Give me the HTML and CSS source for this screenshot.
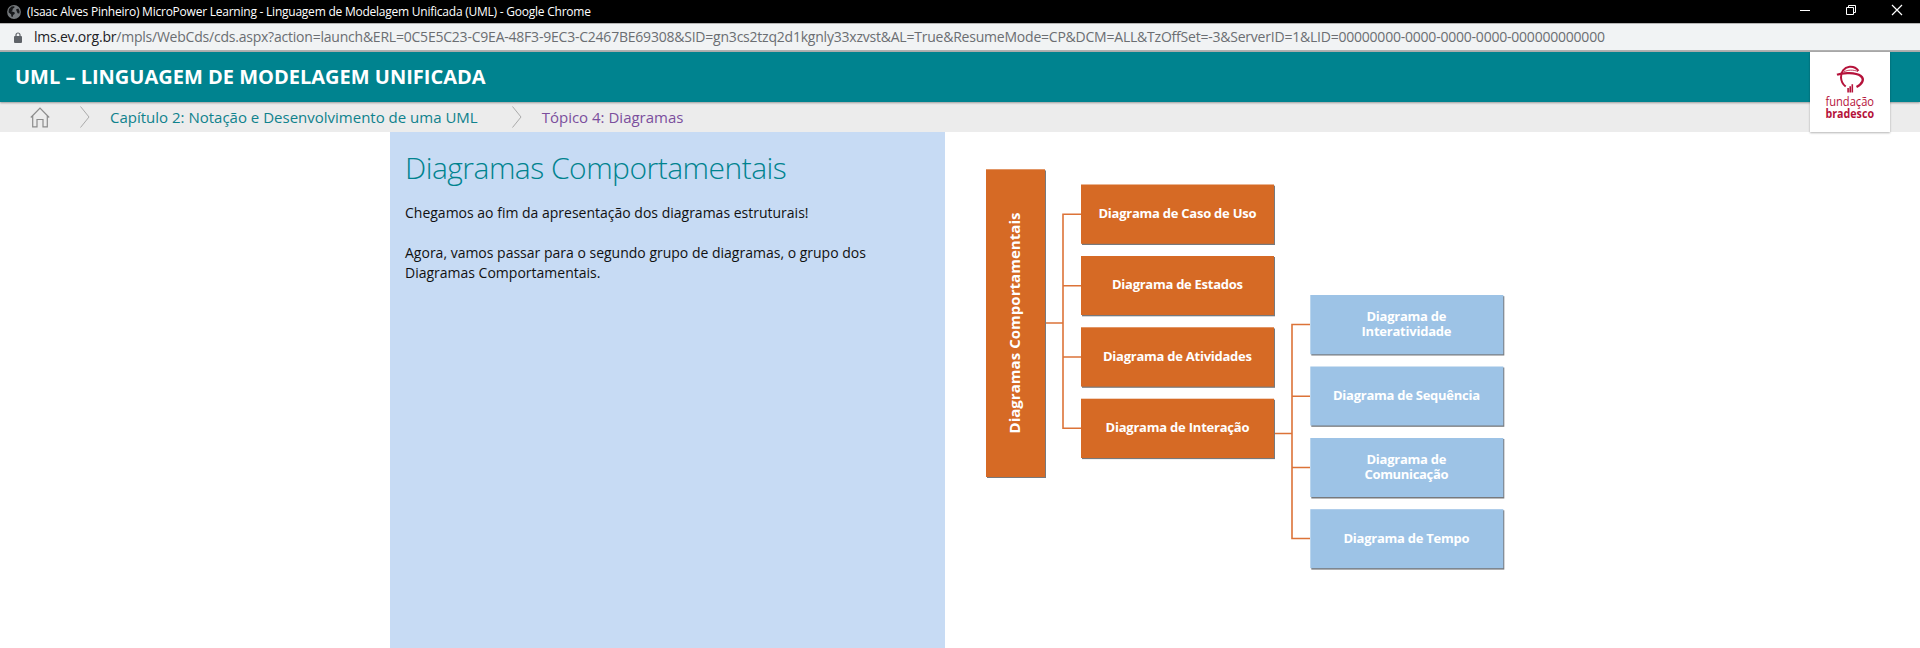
FILE: index.html
```html
<!DOCTYPE html>
<html lang="pt-BR">
<head>
<meta charset="utf-8">
<title>UML – Linguagem de Modelagem Unificada</title>
<link rel="stylesheet" href="styles.css">
</head>
<body>
<div class="titlebar">
  <svg class="globe" width="14" height="14" viewBox="0 0 14 14"><circle cx="7" cy="7" r="6.9" fill="#74787b"/><path d="M2 4 4.500 1.600 7.300 1.300 7.500 2.500 5.800 3.700 5.500 5.500 4.300 6.200 7.500 7.300 7.800 8.800 6.200 10 5.600 12 4.300 11.600 4.200 9.600 1.500 7.200ZM9 4.500 11.300 3.500 12.600 6.200 12.300 8.600 10.600 8.200 9.800 6.400Z" fill="#16181a"/></svg>
  <span class="window-title">(Isaac Alves Pinheiro) MicroPower Learning - Linguagem de Modelagem Unificada (UML) - Google Chrome</span>
  <svg class="controls" width="104" height="23" viewBox="0 0 104 23" fill="none" stroke="#fff"><path d="M0 10.500H10M46.500 7.500H53.500V14.500H46.500ZM48.500 7.500V5.500H55.500V12.500H53.500"/><path d="M92 5 102 15M102 5 92 15" stroke-width="1.200"/></svg>
</div>
<div class="addressbar">
  <svg class="lock" width="8" height="11" viewBox="0 0 8 11"><path d="M2 5V3a2 2 0 0 1 4 0V5" fill="none" stroke="#5f6368" stroke-width="1.200"/><rect y="4" width="8" height="7" rx="1" fill="#5f6368"/></svg>
  <span class="url"><b>lms.ev.org.br</b>/mpls/WebCds/cds.aspx?action=launch&amp;ERL=0C5E5C23-C9EA-48F3-9EC3-C2467BE69308&amp;SID=gn3cs2tzq2d1kgnly33xzvst&amp;AL=True&amp;ResumeMode=CP&amp;DCM=ALL&amp;TzOffSet=-3&amp;ServerID=1&amp;LID=00000000-0000-0000-0000-000000000000</span>
</div>
<header class="header">
  <h1>UML – LINGUAGEM DE MODELAGEM UNIFICADA</h1>
  <div class="logo">
    <svg width="80" height="80" viewBox="0 0 80 80" fill="none" stroke="#b5123a">
      <path d="M48.500 18.800C46 15.500 43 14.400 39.500 14.800 34 15.500 30.700 20 31 25.500c.2 3.800 1.700 6.800 4.700 9" stroke-width="2"/>
      <path d="M27 22.800C33 20.300 46 20.500 50.800 24c4.200 3.200 1.500 8-4.300 11" stroke-width="2.300"/>
      <path d="M34 19.800C38 17.800 43 17.500 48 19.500" stroke-width=".8"/>
      <path d="M38.100 36v4.500M40.200 34.200v6.300M42.300 32.200v8.300" stroke-width="1.600"/>
      <text class="logo-light" x="15.500" y="53.800" textLength="48.500" lengthAdjust="spacingAndGlyphs">fundação</text>
      <text class="logo-bold" x="15.500" y="65.500" textLength="48.500" lengthAdjust="spacingAndGlyphs">bradesco</text>
    </svg>
  </div>
</header>
<nav class="breadcrumb">
  <svg class="home" width="20" height="21" viewBox="0 0 20 21" fill="none" stroke="#8c8c8c" stroke-width="1.200"><path d="M.8 10.500 10 1l9.200 9.500M2.700 9v10.800H7V12.500h6v7.300h4.300V9"/></svg>
  <svg class="chevron" width="10" height="22" viewBox="0 0 10 22" fill="none" stroke="#aaa"><path d="m.5.500 8.500 10.500L.5 21.500"/></svg>
  <a class="chapter">Capítulo 2: Notação e Desenvolvimento de uma UML</a>
  <svg class="chevron second" width="10" height="22" viewBox="0 0 10 22" fill="none" stroke="#aaa"><path d="m.5.500 8.500 10.500L.5 21.500"/></svg>
  <a class="topic">Tópico 4: Diagramas</a>
</nav>
<main class="content">
  <section class="panel">
    <h2>Diagramas Comportamentais</h2>
    <p>Chegamos ao fim da apresentação dos diagramas estruturais!</p>
    <p>Agora, vamos passar para o segundo grupo de diagramas, o grupo dos Diagramas Comportamentais.</p>
  </section>
  <svg class="diagram" width="585" height="516" viewBox="945 132 585 516">
    <g class="links">
      <path d="M1045 323H1063M1081 214.300H1063V428.300H1081M1063 285.700H1081M1063 357H1081"/>
      <path d="M1274 433.500H1292M1310 324.500H1292V538.500H1310M1292 396.200H1310M1292 467.500H1310"/>
    </g>
    <g class="shadow">
      <rect x="987" y="170.500" width="59" height="307.500"/>
      <rect x="1082" y="185.700" width="193" height="59.300"/><rect x="1082" y="257" width="193" height="59.300"/><rect x="1082" y="328.500" width="193" height="59.300"/><rect x="1082" y="399.800" width="193" height="59.300"/>
      <rect x="1311.300" y="296.200" width="193" height="59.300"/><rect x="1311.300" y="367.500" width="193" height="59.300"/><rect x="1311.300" y="439" width="193" height="59.500"/><rect x="1311.300" y="510.300" width="193" height="59.300"/>
    </g>
    <g class="orange">
      <rect x="986" y="169.300" width="59" height="307.700"/>
      <rect x="1081" y="184.500" width="193" height="59.300"/><rect x="1081" y="256" width="193" height="59"/><rect x="1081" y="327.300" width="193" height="59.300"/><rect x="1081" y="398.700" width="193" height="59.300"/>
    </g>
    <g class="blue">
      <rect x="1310.300" y="295" width="193" height="59.300"/><rect x="1310.300" y="366.500" width="193" height="59"/><rect x="1310.300" y="438" width="193" height="59"/><rect x="1310.300" y="509.200" width="193" height="59"/>
    </g>
    <g class="labels">
      <text class="root" transform="translate(1020 323) rotate(-90)" textLength="221">Diagramas Comportamentais</text>
      <text x="1177.500" y="218" textLength="158">Diagrama de Caso de Uso</text>
      <text x="1177.500" y="289.300" textLength="131">Diagrama de Estados</text>
      <text x="1177.500" y="360.700" textLength="149">Diagrama de Atividades</text>
      <text x="1177.500" y="432" textLength="144">Diagrama de Interação</text>
      <text x="1406.500" y="321" textLength="80">Diagrama de</text>
      <text x="1406.500" y="336" textLength="90">Interatividade</text>
      <text x="1406.500" y="400" textLength="147">Diagrama de Sequência</text>
      <text x="1406.500" y="463.500" textLength="80">Diagrama de</text>
      <text x="1406.500" y="478.500" textLength="84">Comunicação</text>
      <text x="1406.500" y="542.500" textLength="126">Diagrama de Tempo</text>
    </g>
  </svg>
</main>
</body>
</html>
```

FILE: styles.css
```css
* { box-sizing: border-box; }
body { margin: 0; height: 648px; display: flex; flex-direction: column; overflow: hidden; background: #fff; font-family: "Open Sans", sans-serif; }
.titlebar { flex: none; height: 23px; display: flex; align-items: center; background: #000; color: #fff; padding-left: 7px; }
.window-title { margin-left: 6px; font-size: 12px; line-height: 23px; white-space: nowrap; letter-spacing: -0.235px; }
.controls { margin-left: auto; margin-right: 16px; }
.addressbar { flex: none; height: 29px; display: flex; align-items: center; background: #f1f3f4; border-top: 1px solid #b4b4b4; border-bottom: 2px solid #b0b0b0; padding-left: 14px; color: #6b6e72; }
.url { margin-left: 12px; font-size: 14px; line-height: 26px; white-space: nowrap; letter-spacing: -0.22px; }
.url b { font-weight: 400; color: #202124; }
.header { flex: none; position: relative; z-index: 2; height: 50px; display: flex; justify-content: space-between; align-items: center; padding: 0 30px 0 15px; background: #00838f; box-shadow: 0 1px 2px rgba(0, 0, 0, .35); }
.header h1 { margin: 0; font-size: 20px; line-height: 50px; font-weight: 700; color: #fff; white-space: nowrap; }
.logo { width: 80px; height: 80px; align-self: flex-start; background: #fff; box-shadow: 0 1px 2px rgba(0, 0, 0, .3); }
.logo svg { display: block; }
.logo text { font-size: 12px; fill: #b5123a; stroke: none; }
.logo .logo-bold { font-size: 11.5px; font-weight: 700; }
.breadcrumb { flex: none; height: 30px; display: flex; align-items: center; padding-left: 30px; background: #ececec; font-size: 15px; line-height: 30px; white-space: nowrap; }
.chevron { margin: 0 20px 0 30px; }
.second { margin-left: 34px; }
.chapter { color: #0f828d; }
.topic { color: #7b4f9d; }
.content { flex: 1; display: flex; padding-left: 390px; }
.panel { width: 555px; background: #c7dbf4; padding: 15px; }
.panel h2 { margin: 0 0 15px; font-size: 30px; line-height: 41px; font-weight: 300; letter-spacing: -0.52px; color: #00838f; white-space: nowrap; }
.panel p { margin: 0 0 20px; font-size: 14px; line-height: 20px; color: #111; }
.diagram { display: block; }
.links { fill: none; stroke: #dc7338; stroke-width: 1.600; }
.shadow { fill: #77797c; }
.orange { fill: #d66a25; }
.blue { fill: #9dc3e6; }
.labels { fill: #fff; font-size: 13px; font-weight: 700; text-anchor: middle; }
.root { font-size: 15px; }
```
